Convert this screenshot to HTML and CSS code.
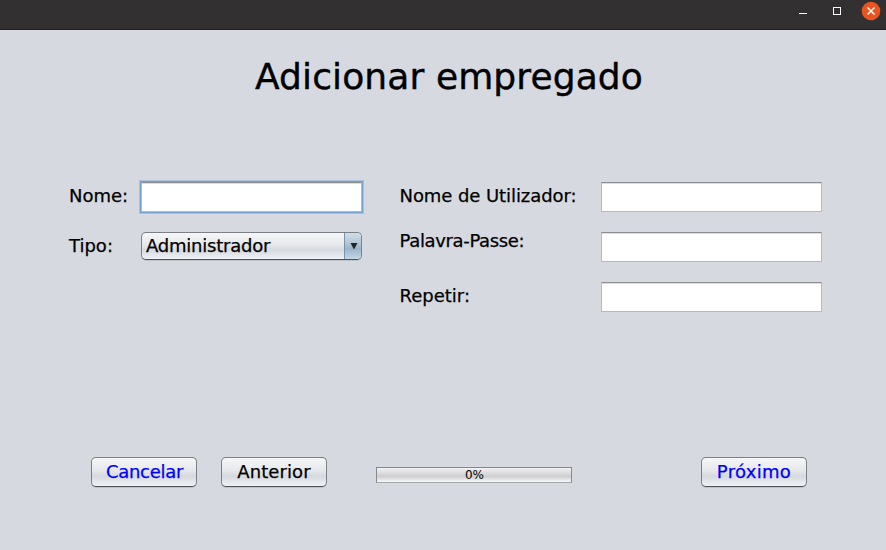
FILE: index.html
```html
<!DOCTYPE html>
<html lang="pt">
<head>
<meta charset="utf-8">
<title>Adicionar empregado</title>
<link rel="stylesheet" href="styles.css">
</head>
<body>
<header class="titlebar">
  <svg class="window-icon" viewBox="0 0 20 21"><path d="M6 13.500h8" stroke="#fff"/></svg>
  <svg class="window-icon" viewBox="0 0 20 21"><rect x="6.500" y="7.500" width="7" height="7" fill="none" stroke="#fff"/></svg>
  <svg class="window-icon" viewBox="0 0 20 21"><circle cx="10" cy="11" r="9.300" fill="#e95420"/><path d="M6.500 7.500l7 7M13.500 7.500l-7 7" stroke="#fff" stroke-width="1.500"/></svg>
</header>
<main>
  <h1>Adicionar empregado</h1>
  <form class="form">
    <section class="column">
      <div class="row row-name"><label for="nome">Nome:</label><input id="nome" class="field field-active" type="text"></div>
      <div class="row row-name"><label>Tipo:</label>
        <div class="combo"><span class="combo-value">Administrador</span><span class="combo-arrow"><svg viewBox="0 0 8 7"><path d="M.5 0h7L4 6.500z" fill="#202428"/></svg></span></div>
      </div>
    </section>
    <section class="column column-login">
      <div class="row"><label class="snug" for="user">Nome de Utilizador:</label><input id="user" class="field" type="text"></div>
      <div class="row"><label class="raised" for="pass">Palavra-Passe:</label><input id="pass" class="field" type="password"></div>
      <div class="row"><label for="again">Repetir:</label><input id="again" class="field" type="password"></div>
    </section>
  </form>
  <footer class="actions">
    <button class="button link cancel" type="button">Cancelar</button>
    <button class="button" type="button">Anterior</button>
    <div class="progress">0%</div>
    <button class="button link next" type="button">Próximo</button>
  </footer>
</main>
</body>
</html>
```
FILE: styles.css
```css
* { box-sizing: border-box; }
body {
  margin: 0;
  height: 550px;
  display: flex;
  flex-direction: column;
  overflow: hidden;
  background: #d6d9df;
  color: #000;
  font: 18px/22px "DejaVu Sans", sans-serif;
  -webkit-text-stroke: 0.25px currentColor;
}
.titlebar {
  height: 30px;
  display: flex;
  justify-content: flex-end;
  gap: 14px;
  padding-right: 5px;
  background: #333031;
  border-bottom: 1px solid #211f1f;
}
.window-icon { width: 20px; height: 21px; }
main { flex: 1; display: flex; flex-direction: column; }
h1 {
  margin: 25px 0 0 255px;
  font-size: 36px;
  line-height: 44px;
  font-weight: 400;
  letter-spacing: 0.11px;
  white-space: nowrap;
  -webkit-text-stroke-width: 0.4px;
}
.form { display: flex; margin: 83px 0 0 69px; gap: 38px; height: 150px; }
.column { display: flex; flex-direction: column; gap: 20px; }
.row { display: grid; grid-template-columns: 201px 221px; height: 30px; align-items: start; }
.row-name { grid-template-columns: 72px 221px; }
label { padding-top: 3px; white-space: nowrap; }
.column-login label { margin-left: -0.5px; }
.snug { letter-spacing: -0.07px; }
.raised { margin-top: -5px; letter-spacing: -0.35px; }
.field {
  width: 221px;
  height: 30px;
  padding: 4px;
  border: 1px solid #b8b9bc;
  border-top-color: #8d8e91;
  border-radius: 0;
  background: #fff;
  box-shadow: inset 0 1px #dcdcdc;
  outline: 0;
  font: inherit;
}
.field-active { box-shadow: inset 0 1px #dcdcdc, 0 0 0 1px #73a4d1, 0 0 0 2px #a9c1dc; }
.combo {
  display: flex;
  height: 28px;
  border: 1px solid #7b7f86;
  border-bottom-color: #4d5056;
  border-radius: 5px;
  overflow: hidden;
  background: linear-gradient(#f6f7f9, #e6e8eb 45%, #d6d9de 65%, #eff2f6);
  box-shadow: 0 1px #bfc2c8;
}
.combo-value { flex: 1; padding: 2px 0 0 4px; letter-spacing: -0.22px; }
.combo-arrow {
  width: 17px;
  display: flex;
  align-items: center;
  justify-content: center;
  padding-left: 1px;
  border-left: 1px solid #7894ac;
  background: linear-gradient(#d2dfe9, #adc2d3 45%, #9bb4c8 60%, #c2d7e6);
}
.combo-arrow svg { width: 8px; height: 7px; }
.actions { display: flex; margin: 125px 79px 0 91px; }
.button {
  width: 106px;
  height: 30px;
  margin-right: 24px;
  padding: 0;
  border: 1px solid #7b7f86;
  border-bottom-color: #4d5056;
  border-radius: 5px;
  background: linear-gradient(#f6f7f9, #e6e8eb 45%, #d6d9de 65%, #eff2f6);
  box-shadow: 0 1px #bfc2c8;
  color: #000;
  font: inherit;
  letter-spacing: 0.1px;
}
.link { color: #00f; }
.cancel { padding-left: 1px; letter-spacing: -0.3px; }
.next { margin: 0 0 0 auto; letter-spacing: 0.3px; }
.progress {
  width: 196px;
  height: 16px;
  margin: 10px 0 0 25px;
  padding-left: 1px;
  border: 1px solid #86888f;
  border-bottom-color: #a6a8ae;
  background: linear-gradient(#f1f1f2, #d6d7d9 45%, #ceced0 60%, #f8f8f9);
  font-size: 12px;
  line-height: 14px;
  text-align: center;
  -webkit-text-stroke-width: 0;
}
```
